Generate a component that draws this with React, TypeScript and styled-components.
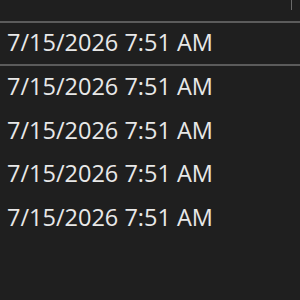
import React from "react";
import styled, { createGlobalStyle } from "styled-components";

const GlobalStyle = createGlobalStyle`
  html, body {
    margin: 0;
    padding: 0;
    background: #1f1f1f;
  }
  #root {
    width: 300px;
    height: 300px;
    overflow: hidden;
  }
`;

const Grid = styled.div`
  width: 300px;
  height: 300px;
  background: #1f1f1f;
  font-family: "Open Sans", "Noto Sans", sans-serif;
  color: #e8e8e8;
  display: flex;
  flex-direction: column;
`;

const Header = styled.div`
  height: 23px;
  box-sizing: border-box;
  flex: none;
  display: flex;
  justify-content: flex-end;
  border-bottom: 2px solid #5b5b5b;
`;

const ColumnGrip = styled.div`
  width: 1px;
  height: 10px;
  margin-right: 8px;
  background: #6a6a6a;
`;

const Row = styled.div<{ $divided?: boolean }>`
  height: ${p => (p.$divided ? 43 : 43.5)}px;
  box-sizing: border-box;
  flex: none;
  display: flex;
  align-items: center;
  padding-left: 7px;
  padding-bottom: 2px;
  font-size: 23.5px;
  line-height: 1;
  border-bottom: ${p => (p.$divided ? "2px solid #5b5b5b" : "none")};
`;

const rows = [
  "7/15/2026 7:51 AM",
  "7/15/2026 7:51 AM",
  "7/15/2026 7:51 AM",
  "7/15/2026 7:51 AM",
  "7/15/2026 7:51 AM",
];

const App = () => {
  return <>
    <GlobalStyle/>
    <Grid>
      <Header>
        <ColumnGrip/>
      </Header>
      {
        rows.map((text, idx) =>
          <Row key={idx} $divided={idx === 0}>{text}</Row>
        )
      }
    </Grid>
  </>;
};

export default App;
